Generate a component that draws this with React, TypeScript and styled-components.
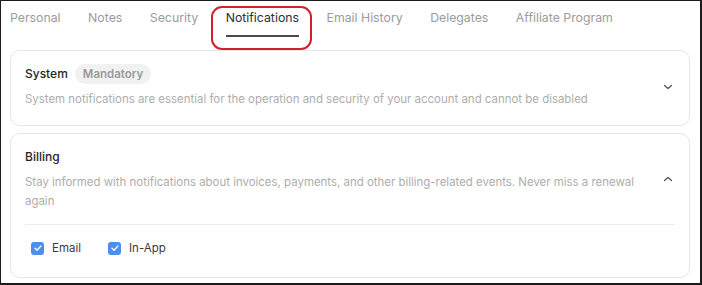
import React from "react";
import styled, { createGlobalStyle } from "styled-components";

const Global = createGlobalStyle`
  html, body { margin: 0; padding: 0; background: #fff; }
  body { font-family: Inter, "Noto Sans", Arial, sans-serif; -webkit-font-smoothing: antialiased; }
  * { box-sizing: border-box; }
`;

const Frame = styled.div`
  width: 702px;
  height: 285px;
  border: 1px solid #1c1c1c;
  border-right-width: 2px;
  border-bottom-width: 2px;
  padding: 0 10px 0 9px;
  overflow: hidden;
`;

const Tabs = styled.nav`
  display: flex;
  gap: 27.5px;
  height: 49px;
  align-items: flex-start;
`;

const Tab = styled.div<{ $active?: boolean }>`
  position: relative;
  padding-top: 7px;
  height: 36px;
  font-size: 12.3px;
  line-height: 20px;
  color: ${(p) => (p.$active ? "#2f2f2f" : "#9c9c9c")};
  border-bottom: 2px solid ${(p) => (p.$active ? "#4a4a4a" : "transparent")};
  white-space: nowrap;
`;

const Highlight = styled.span`
  position: absolute;
  left: -15px;
  right: -13px;
  top: 5px;
  height: 44px;
  border: 2px solid #d3212b;
  border-radius: 11px;
  pointer-events: none;
`;

const Stack = styled.div`
  display: flex;
  flex-direction: column;
  gap: 7px;
`;

const Card = styled.section`
  border: 1px solid #e6e6e6;
  border-radius: 10px;
  padding: 13px 14px 16px;
  background: #fff;
`;

const Header = styled.div`
  display: flex;
  align-items: center;
  gap: 12px;
`;

const HeaderText = styled.div`
  flex: 1;
`;

const TitleRow = styled.div`
  display: flex;
  align-items: center;
  gap: 7px;
  height: 20px;
`;

const Title = styled.h3`
  margin: 0;
  font-size: 12px;
  font-weight: 500;
  color: #262626;
  line-height: 20px;
`;

const Badge = styled.span`
  display: inline-flex;
  align-items: center;
  height: 20px;
  padding: 0 8px;
  border-radius: 10px;
  background: #f1f1f1;
  color: #9a9a9a;
  font-size: 11.5px;
  font-weight: 600;
`;

const Desc = styled.p`
  margin: 6px 0 0;
  font-size: 11.45px;
  line-height: 19px;
  color: #adadad;
`;

const Chevron = styled.svg`
  width: 12px;
  height: 12px;
  flex: none;
  margin-right: 1px;
  color: #555;
`;

const Divider = styled.hr`
  border: none;
  border-top: 1px solid #ececec;
  margin: 13px 0 0;
`;

const Options = styled.div`
  display: flex;
  gap: 27px;
  padding: 13px 6px 3px;
`;

const Option = styled.label`
  display: flex;
  align-items: center;
  gap: 8px;
  font-size: 11.5px;
  line-height: 20px;
  color: #3a3a3a;
`;

const Box = styled.span`
  width: 13px;
  height: 13px;
  border-radius: 3px;
  background: #4b8ef0;
  display: inline-flex;
  align-items: center;
  justify-content: center;
`;

const ChevronIcon = ({ up }: { up?: boolean }) => (
  <Chevron viewBox="0 0 12 12" fill="none">
    <path
      d={up ? "M2.5 7.5L6 4.5L9.5 7.5" : "M2.5 4.5L6 7.5L9.5 4.5"}
      stroke="currentColor"
      strokeWidth="1.3"
      strokeLinecap="round"
      strokeLinejoin="round"
    />
  </Chevron>
);

const Check = ({ label }: { label: string }) => (
  <Option>
    <Box>
      <svg width="10" height="10" viewBox="0 0 10 10" fill="none">
        <path d="M2 5.2L4.1 7.2L8 2.9" stroke="#fff" strokeWidth="1.4" strokeLinecap="round" strokeLinejoin="round" />
      </svg>
    </Box>
    {label}
  </Option>
);

const tabs = ["Personal", "Notes", "Security", "Notifications", "Email History", "Delegates", "Affiliate Program"];

export default function App() {
  return (
    <>
      <Global />
      <Frame>
        <Tabs>
          {tabs.map((t) => (
            <Tab key={t} $active={t === "Notifications"}>
              {t}
              {t === "Notifications" && <Highlight />}
            </Tab>
          ))}
        </Tabs>
        <Stack>
          <Card>
            <Header>
              <HeaderText>
                <TitleRow>
                  <Title>System</Title>
                  <Badge>Mandatory</Badge>
                </TitleRow>
                <Desc>
                  System notifications are essential for the operation and security of your account and cannot be disabled
                </Desc>
              </HeaderText>
              <ChevronIcon />
            </Header>
          </Card>
          <Card>
            <Header>
              <HeaderText>
                <TitleRow>
                  <Title>Billing</Title>
                </TitleRow>
                <Desc>
                  Stay informed with notifications about invoices, payments, and other billing-related events. Never miss a renewal again
                </Desc>
              </HeaderText>
              <ChevronIcon up />
            </Header>
            <Divider />
            <Options>
              <Check label="Email" />
              <Check label="In-App" />
            </Options>
          </Card>
        </Stack>
      </Frame>
    </>
  );
}
